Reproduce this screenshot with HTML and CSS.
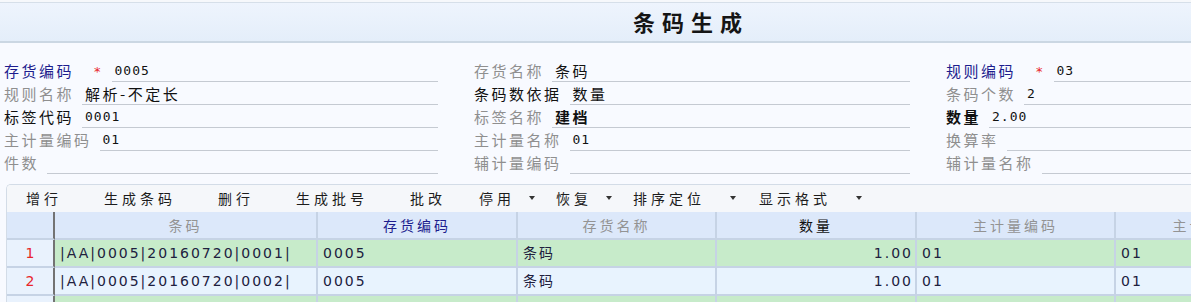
FILE: index.html
```html
<!DOCTYPE html>
<html>
<head>
    <meta charset="UTF-8">
    <title>条码生成</title>
    <link rel="stylesheet" href="styles.css">
</head>
<body>
<div class="topline"></div>
<div class="head">
    <h1>条码生成</h1>
</div>

<div class="form">
    <div class="field"><span class="lbl lbl-blue">存货编码</span><span class="req">*</span><span class="val num">0005</span></div>
    <div class="field"><span class="lbl lbl-gray">存货名称</span><span class="val">条码</span></div>
    <div class="field"><span class="lbl lbl-blue">规则编码</span><span class="req">*</span><span class="val num">03</span></div>

    <div class="field"><span class="lbl lbl-gray">规则名称</span><span class="val">解析-不定长</span></div>
    <div class="field"><span class="lbl">条码数依据</span><span class="val">数量</span></div>
    <div class="field"><span class="lbl lbl-gray">条码个数</span><span class="val num">2</span></div>

    <div class="field"><span class="lbl">标签代码</span><span class="val num">0001</span></div>
    <div class="field"><span class="lbl lbl-gray">标签名称</span><span class="val val-bold">建档</span></div>
    <div class="field"><span class="lbl lbl-bold">数量</span><span class="val num">2.00</span></div>

    <div class="field"><span class="lbl lbl-gray">主计量编码</span><span class="val num">01</span></div>
    <div class="field"><span class="lbl lbl-gray">主计量名称</span><span class="val num">01</span></div>
    <div class="field"><span class="lbl lbl-gray">换算率</span><span class="val"></span></div>

    <div class="field"><span class="lbl lbl-gray">件数</span><span class="val"></span></div>
    <div class="field"><span class="lbl lbl-gray">辅计量编码</span><span class="val"></span></div>
    <div class="field"><span class="lbl lbl-gray">辅计量名称</span><span class="val"></span></div>
</div>

<div class="grid">
    <div class="toolbar">
        <span class="tool">增行</span>
        <span class="tool">生成条码</span>
        <span class="tool">删行</span>
        <span class="tool">生成批号</span>
        <span class="tool tool-last">批改</span>
        <span class="tool drop">停用<i class="caret"></i></span>
        <span class="tool drop">恢复<i class="caret"></i></span>
        <span class="tool drop drop-wide">排序定位<i class="caret"></i></span>
        <span class="tool drop drop-wide">显示格式<i class="caret"></i></span>
    </div>
    <div class="row row-head">
        <div class="cell rn"></div>
        <div class="cell muted">条码</div>
        <div class="cell key">存货编码</div>
        <div class="cell muted">存货名称</div>
        <div class="cell">数量</div>
        <div class="cell muted">主计量编码</div>
        <div class="cell muted">主计量名称</div>
    </div>
    <div class="row row-green">
        <div class="cell rn">1</div>
        <div class="cell">|AA|0005|20160720|0001|</div>
        <div class="cell">0005</div>
        <div class="cell">条码</div>
        <div class="cell right">1.00</div>
        <div class="cell">01</div>
        <div class="cell">01</div>
    </div>
    <div class="row row-blue">
        <div class="cell rn">2</div>
        <div class="cell">|AA|0005|20160720|0002|</div>
        <div class="cell">0005</div>
        <div class="cell">条码</div>
        <div class="cell right">1.00</div>
        <div class="cell">01</div>
        <div class="cell">01</div>
    </div>
    <div class="row row-green">
        <div class="cell rn"></div>
        <div class="cell"></div>
        <div class="cell"></div>
        <div class="cell"></div>
        <div class="cell"></div>
        <div class="cell"></div>
        <div class="cell"></div>
    </div>
</div>
</body>
</html>
```

FILE: styles.css
```css
*{ margin:0; padding:0; box-sizing:border-box; }
body{ width:1191px; overflow:hidden; background:#f8faff; color:#111; font:15px/1.2 "Noto Sans CJK SC", sans-serif; }

/* title band */
.topline{ height:3px; background:#f6f8fb; border-bottom:1px solid #d6dfe9; }
.head{ height:40px; background:linear-gradient(#eef4fd, #e4eefa); border-bottom:2px solid #cbd7e3; }
.head h1{ padding-left:633px; font-size:22px; font-weight:bold; letter-spacing:7px; line-height:36px; color:#151515; }

/* header form */
.form{ display:grid; grid-template-columns:434px 436px 1fr; column-gap:36px; padding:16px 0 0 4px; }
.field{ display:flex; align-items:flex-end; height:23px; }
.lbl{ margin-right:8px; line-height:20px; padding-bottom:1px; letter-spacing:2.5px; white-space:nowrap; }
.lbl-gray{ color:#8f8f8f; }
.lbl-blue{ color:#1d1d8e; }
.lbl-bold{ font-weight:bold; }
.req{ margin:0 11px 0 12px; line-height:20px; color:#e8262a; font:13px/20px "DejaVu Sans", sans-serif; }
.val{ flex:1; height:22px; padding-left:3px; line-height:21px; border-bottom:1px solid #c5cad2; letter-spacing:2.5px; white-space:nowrap; }
.val-bold{ font-weight:bold; }
.num{ font:13px/21px "DejaVu Sans Mono", monospace; letter-spacing:1px; }

/* list */
.grid{ margin:10px 0 0 6px; border-top:1px solid #d3dce7; border-left:1px solid #d3dce7; border-top-left-radius:5px; overflow:hidden; }
.toolbar{ display:flex; align-items:center; height:27px; padding-left:19px; background:#f5f7fa; white-space:nowrap; }
.tool{ margin-right:42px; font-size:14px; letter-spacing:4px; color:#1c1c1c; }
.tool-last{ margin-right:33px; }
.drop{ display:flex; align-items:center; margin-right:21px; }
.drop .caret{ margin-left:14px; }
.drop-wide{ margin-right:23px; }
.drop-wide .caret{ margin-left:25px; }
.caret{ border-left:3px solid transparent; border-right:3px solid transparent; border-top:4px solid #333; }

.row{ display:grid; grid-template-columns:48px 263px 200px 199px 200px 199px 200px; height:28px; }
.cell{ padding:0 5px; border-right:2px solid #c6d3e5; border-bottom:2px solid #c6d3e5; white-space:nowrap; overflow:hidden; font:14px/26px "DejaVu Sans", "Noto Sans CJK SC", sans-serif; letter-spacing:2px; color:#20203e; }
.row-head .cell{ text-align:center; background:#dce8fa; color:#111; font-family:"Noto Sans CJK SC", sans-serif; letter-spacing:3px; }
.row-head .muted{ color:#939393; }
.row-head .key{ color:#1d1d8e; }
.row-green .cell{ background:#c7ebca; }
.row-blue .cell{ background:#e8f3fe; }
.row .rn{ text-align:center; background:#e9f2fd; border-right-color:#737373; color:#e8262a; letter-spacing:0; }
.row-head .rn{ background:#dce8fa; }
.right{ text-align:right; padding-right:2px; }
```
